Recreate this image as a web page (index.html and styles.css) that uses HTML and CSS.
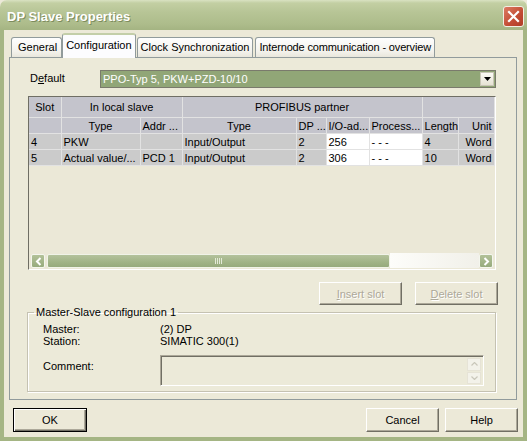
FILE: index.html
```html
<!DOCTYPE html>
<html lang="en">
<head>
    <meta charset="UTF-8">
    <title>DP Slave Properties</title>
    <link rel="stylesheet" href="styles.css">
</head>
<body>
    <div class="window">
        <div class="titlebar">
            <span class="title">DP Slave Properties</span>
            <span class="close-btn">
                <svg width="13" height="13" viewBox="0 0 13 13"><path d="M2 2 L11 11 M11 2 L2 11" stroke="#fff" stroke-width="2.2" stroke-linecap="square"/></svg>
            </span>
        </div>
        <div class="frame">
            <div class="tabs">
                <div class="tab tab-first">General</div>
                <div class="tab active">Configuration</div>
                <div class="tab">Clock Synchronization</div>
                <div class="tab tab-long">Internode communication - overview</div>
            </div>

            <div class="panel">
                <div class="default-row">
                    <label class="default-label">D<u>e</u>fault</label>
                    <div class="combo">
                        <span class="combo-text">PPO-Typ 5, PKW+PZD-10/10</span>
                        <span class="combo-btn">
                            <svg width="7" height="4" viewBox="0 0 7 4"><path d="M0 0 H7 L3.5 4 Z" fill="#000"/></svg>
                        </span>
                    </div>
                </div>

                <div class="grid">
                    <div class="grid-body">
                        <table class="slots">
                            <colgroup>
                                <col style="width:32px"><col style="width:79px"><col style="width:42px">
                                <col style="width:114px"><col style="width:30px"><col style="width:43px">
                                <col style="width:53px"><col style="width:36px"><col style="width:36px">
                            </colgroup>
                            <tr class="head head-1">
                                <th class="center">Slot</th>
                                <th colspan="2" class="center">In local slave</th>
                                <th colspan="4" class="center">PROFIBUS partner</th>
                                <th colspan="2"></th>
                            </tr>
                            <tr class="head head-2">
                                <th></th>
                                <th class="center">Type</th>
                                <th>Addr ...</th>
                                <th class="center">Type</th>
                                <th class="right">DP ...</th>
                                <th>I/O-ad...</th>
                                <th class="center">Process...</th>
                                <th>Length</th>
                                <th class="right">Unit</th>
                            </tr>
                            <tr class="row">
                                <td>4</td>
                                <td>PKW</td>
                                <td></td>
                                <td>Input/Output</td>
                                <td>2</td>
                                <td class="edit">256</td>
                                <td class="edit">- - -</td>
                                <td>4</td>
                                <td class="right">Word</td>
                            </tr>
                            <tr class="row">
                                <td>5</td>
                                <td>Actual value/...</td>
                                <td>PCD 1</td>
                                <td>Input/Output</td>
                                <td>2</td>
                                <td class="edit">306</td>
                                <td class="edit">- - -</td>
                                <td>10</td>
                                <td class="right">Word</td>
                            </tr>
                        </table>
                    </div>
                    <div class="hscroll">
                        <span class="sb-arrow">
                            <svg width="7" height="9" viewBox="0 0 7 9"><path d="M5.5 1 L2 4.5 L5.5 8" stroke="#fff" stroke-width="2" fill="none"/></svg>
                        </span>
                        <span class="sb-thumb">
                            <svg width="8" height="6" viewBox="0 0 8 6"><path d="M0.5 0V6M2.5 0V6M4.5 0V6M6.5 0V6" stroke="#e4ead8" stroke-width="1"/></svg>
                        </span>
                        <span class="sb-track"></span>
                        <span class="sb-arrow">
                            <svg width="7" height="9" viewBox="0 0 7 9"><path d="M1.5 1 L5 4.5 L1.5 8" stroke="#fff" stroke-width="2" fill="none"/></svg>
                        </span>
                    </div>
                </div>

                <div class="slot-buttons">
                    <button class="btn" disabled><u>I</u>nsert slot</button>
                    <button class="btn" disabled><u>D</u>elete slot</button>
                </div>

                <fieldset class="group">
                    <legend>Master-Slave configuration 1</legend>
                    <div class="info">
                        <span class="info-label">Master:</span><span>(2) DP</span>
                        <span class="info-label">Station:</span><span>SIMATIC 300(1)</span>
                    </div>
                    <div class="comment-row">
                        <span class="info-label">Comment:</span>
                        <div class="comment-box">
                            <div class="mini-scroll">
                                <span class="mini-arrow">
                                    <svg width="7" height="4" viewBox="0 0 7 4"><path d="M0.5 3.5 L3.5 0.5 L6.5 3.5" stroke="#c9c7ba" stroke-width="1.2" fill="none"/></svg>
                                </span>
                                <span class="mini-arrow">
                                    <svg width="7" height="4" viewBox="0 0 7 4"><path d="M0.5 0.5 L3.5 3.5 L6.5 0.5" stroke="#c9c7ba" stroke-width="1.2" fill="none"/></svg>
                                </span>
                            </div>
                        </div>
                    </div>
                </fieldset>
            </div>

            <div class="footer">
                <button class="btn btn-default">OK</button>
                <div class="footer-right">
                    <button class="btn btn-wide">Cancel</button>
                    <button class="btn btn-wide">Help</button>
                </div>
            </div>
        </div>
    </div>
</body>
</html>
```

FILE: styles.css
```css
body {
    margin: 0;
    font-family: "Liberation Sans", Arial, sans-serif;
    font-size: 11px;
    color: #000;
    background: #ece9d8;
}
.window {
    width: 527px;
    height: 441px;
    display: flex;
    flex-direction: column;
    overflow: hidden;
}
.titlebar {
    height: 30px;
    flex: none;
    display: flex;
    align-items: center;
    justify-content: space-between;
    padding: 0 3px 0 7px;
    box-sizing: border-box;
    background: linear-gradient(#d9e2c2 0, #c3cfa3 3px, #b7c596 12px, #adbc8b 24px, #a4b482 30px);
    border-radius: 7px 7px 0 0;
}
.title {
    font-weight: bold;
    font-size: 13px;
    color: #fff;
    text-shadow: 1px 1px 0 #7d8c5d;
    padding-top: 2px;
}
.close-btn {
    width: 19px;
    height: 19px;
    border: 1px solid #f2efe4;
    border-radius: 3px;
    background: linear-gradient(135deg, #dc7b63, #c24b33 60%, #b03d27);
    display: flex;
    align-items: center;
    justify-content: center;
    margin-top: 3px;
}
.frame {
    flex: 1;
    display: flex;
    flex-direction: column;
    border: 4px solid #a5b584;
    border-top: none;
    padding: 0 6px 0 5px;
    background: #ece9d8;
}
.tabs {
    display: flex;
    align-items: flex-end;
    height: 27px;
    padding-left: 2px;
    position: relative;
    z-index: 1;
}
.tab {
    height: 19px;
    line-height: 19px;
    padding: 0 3px;
    border: 1px solid #919b9c;
    border-bottom: none;
    border-radius: 3px 3px 0 0;
    background: linear-gradient(#fefefe, #f3f2ec 70%, #e9e7dc);
    margin-right: 2px;
    white-space: nowrap;
}
.tab-first {
    padding: 0 4px 0 6px;
}
.tab-long {
    letter-spacing: -0.15px;
}
.tab.active {
    height: 23px;
    line-height: 20px;
    padding: 0 3px;
    margin: 0 1px -1px -2px;
    background: #fcfcfe;
    border-top: 2px solid #c3cea8;
}
.panel {
    height: 343px;
    box-sizing: border-box;
    border: 1px solid #919b9c;
    background: #ecead9;
    padding: 12px 20px 0 18px;
    display: flex;
    flex-direction: column;
}
.default-row {
    display: flex;
    align-items: center;
    height: 18px;
}
.default-label {
    width: 70px;
    padding-left: 2px;
    margin-top: -2px;
}
.combo {
    flex: 1;
    height: 18px;
    box-sizing: border-box;
    border: 1px solid #7a7a6c;
    background: #91a677;
    display: flex;
    align-items: center;
    justify-content: space-between;
    padding: 0 1px 0 2px;
}
.combo-text {
    color: #fff;
}
.combo-btn {
    width: 14px;
    height: 14px;
    box-sizing: border-box;
    border: 1px solid #c9c6b6;
    background: linear-gradient(#fbfaf5, #e6e3d4);
    display: flex;
    align-items: center;
    justify-content: center;
}
.grid {
    margin-top: 8px;
    height: 174px;
    box-sizing: border-box;
    border-left: 1px solid #6f6e64;
    border-top: 1px solid #6f6e64;
    border-right: 1px solid #fff;
    border-bottom: 1px solid #fff;
    display: flex;
    flex-direction: column;
    background: #ebe8d7;
}
.grid-body {
    flex: 1;
    overflow: hidden;
}
.slots {
    table-layout: fixed;
    border-collapse: collapse;
    width: 465px;
    font-size: 11px;
}
.slots th, .slots td {
    padding: 0 2px;
    font-weight: normal;
    text-align: left;
    white-space: nowrap;
    overflow: hidden;
    border-right: 1px solid #e2e2e2;
    border-bottom: 1px solid #e2e2e2;
}
.head th {
    background: #c4c4cc;
}
.head-1 th {
    height: 20px;
}
.head-2 th {
    height: 15px;
}
.row td {
    height: 15px;
    background: #cbcbcb;
}
.slots .edit {
    background: #fff;
}
.slots .center {
    text-align: center;
}
.slots .right {
    text-align: right;
}
.hscroll {
    height: 16px;
    flex: none;
    display: flex;
    padding: 0 2px 1px 2px;
    box-sizing: border-box;
}
.sb-arrow {
    width: 14px;
    height: 14px;
    margin-top: 1px;
    box-sizing: border-box;
    border: 1px solid #f4f6ee;
    border-radius: 2px;
    background: linear-gradient(#b2c198, #97ab7d);
    display: flex;
    align-items: center;
    justify-content: center;
}
.sb-thumb {
    width: 343px;
    height: 14px;
    margin: 1px 0 0 2px;
    box-sizing: border-box;
    border: 1px solid #f0f3e8;
    border-radius: 2px;
    background: linear-gradient(#b4c29c, #a0b386 60%, #96aa7c);
    display: flex;
    align-items: center;
    justify-content: center;
}
.sb-track {
    flex: 1;
    background: linear-gradient(90deg, #fdfdfa, #f1f0e9);
}
.slot-buttons {
    display: flex;
    justify-content: flex-end;
    gap: 13px;
    margin: 12px -2px 0 0;
}
.btn {
    font-family: "Liberation Sans", Arial, sans-serif;
    font-size: 11px;
    color: #000;
    height: 23px;
    padding: 0;
    box-sizing: border-box;
    border: 1px solid;
    border-color: #fff #716f64 #716f64 #fff;
    box-shadow: inset -1px -1px 0 #aca899;
    background: #ece9d8;
}
.slot-buttons .btn {
    width: 83px;
}
.btn:disabled {
    color: #aca899;
    text-shadow: 1px 1px 0 #fff;
}
.group {
    margin: 1px 0 0 -1px;
    padding: 4px 11px 5px 15px;
    border: 1px solid #c5c2b2;
    box-shadow: inset 1px 1px 0 #fff, 1px 1px 0 #fff;
    min-width: 0;
}
.group legend {
    padding: 0 2px;
    margin-left: -9px;
    line-height: 13px;
}
.info {
    display: grid;
    grid-template-columns: 117px 1fr;
    line-height: 12px;
}
.comment-row {
    display: flex;
    margin-top: 8px;
}
.comment-row .info-label {
    width: 117px;
    padding-top: 5px;
}
.comment-box {
    flex: 1;
    height: 31px;
    box-sizing: border-box;
    border: 1px solid;
    border-color: #aca899 #fff #fff #aca899;
    box-shadow: inset 1px 1px 0 #716f64;
    display: flex;
    justify-content: flex-end;
    padding: 2px 2px 1px 0;
}
.mini-scroll {
    display: flex;
    flex-direction: column;
    gap: 1px;
}
.mini-arrow {
    width: 14px;
    height: 13px;
    box-sizing: border-box;
    border: 1px solid #e6e3d6;
    background: #f3f2ea;
    display: flex;
    align-items: center;
    justify-content: center;
}
.footer {
    display: flex;
    justify-content: space-between;
    margin-top: 8px;
    padding-left: 4px;
}
.footer-right {
    display: flex;
    gap: 6px;
    margin-right: -1px;
}
.btn-default {
    width: 74px;
    height: 24px;
    border: 1px solid #000;
    box-shadow: inset 1px 1px 0 #fff, inset -1px -1px 0 #716f64, inset -2px -2px 0 #aca899;
}
.btn-wide {
    width: 73px;
    height: 24px;
}
```
